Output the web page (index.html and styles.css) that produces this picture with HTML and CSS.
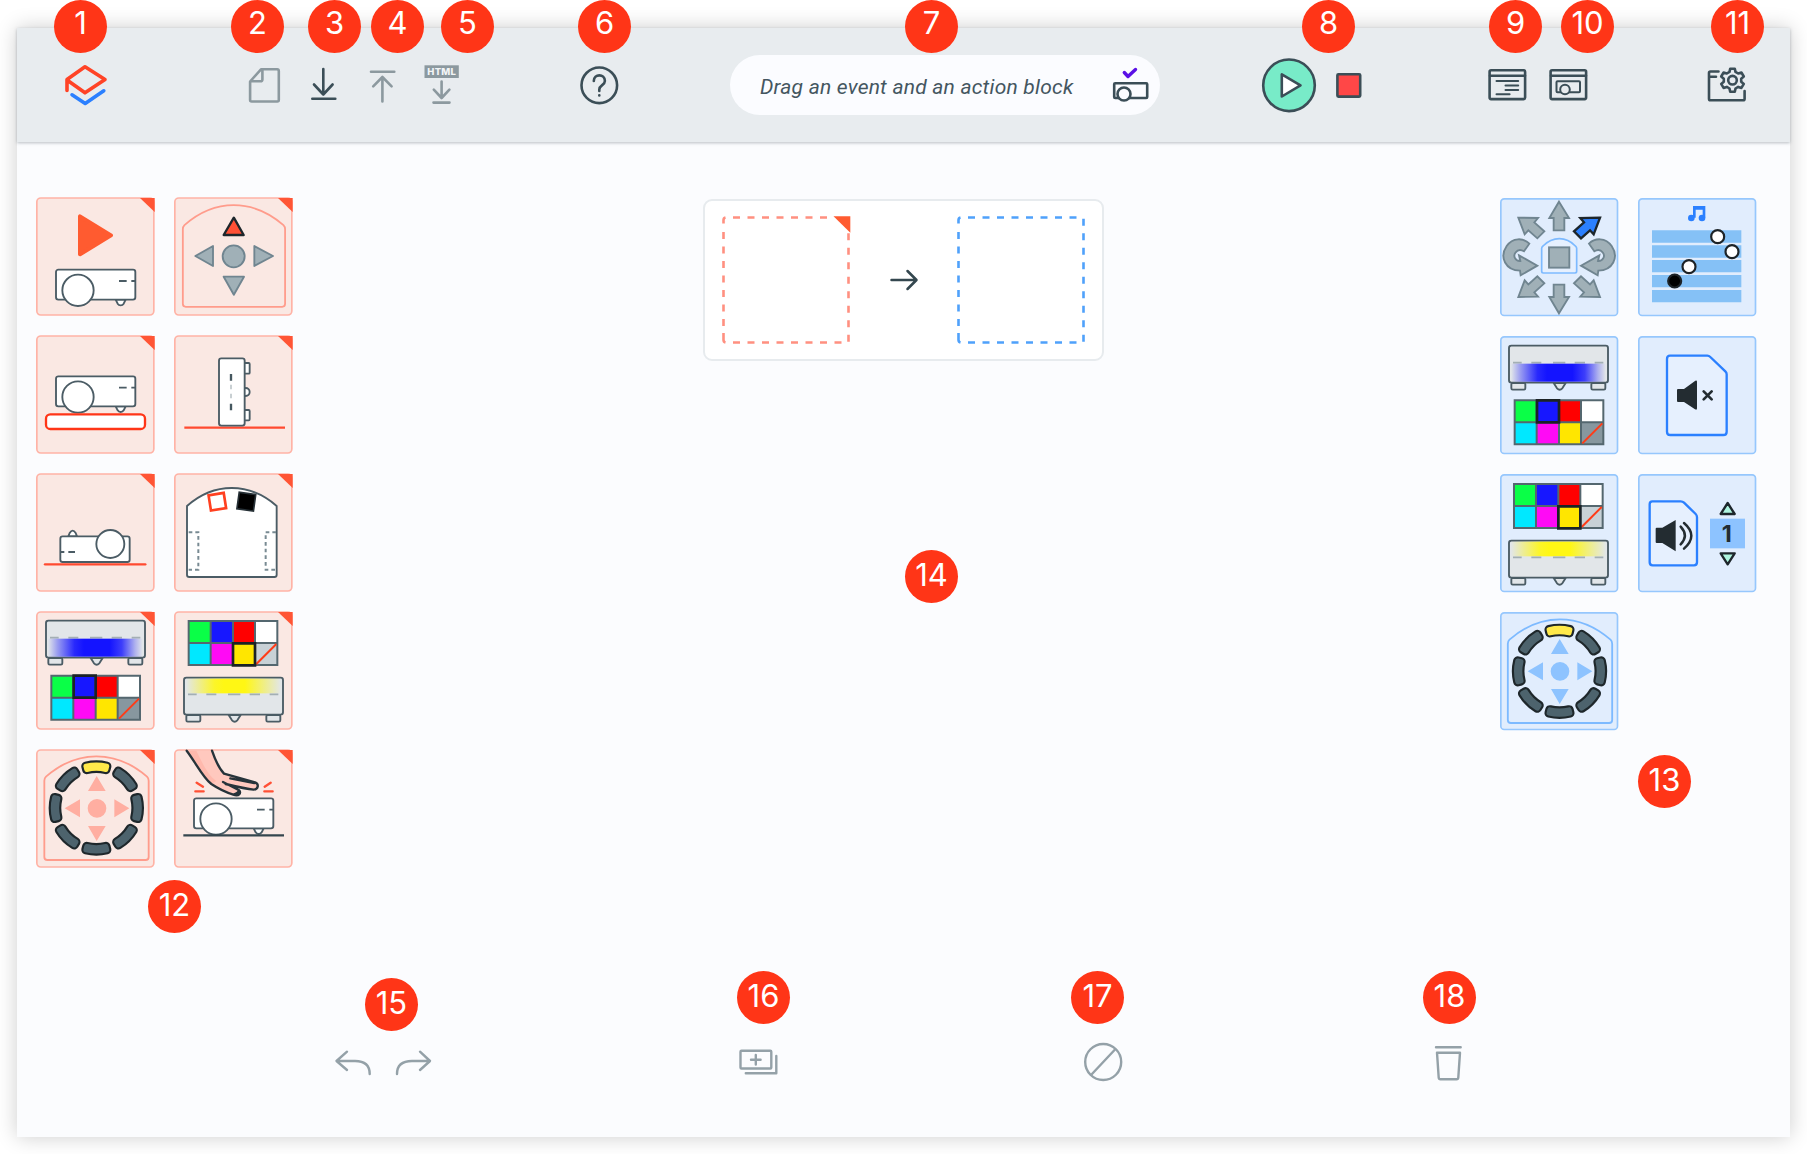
FILE: index.html
```html
<!DOCTYPE html>
<html lang="en">
<head>
<meta charset="utf-8">
<title>Robot blocks editor</title>
<link rel="stylesheet" href="styles.css">
</head>
<body>
<svg class="defs" width="0" height="0" aria-hidden="true">
  <defs>
    <linearGradient id="glow-blue"><stop offset="0" stop-color="#1414ff" stop-opacity="0"/><stop offset=".1" stop-color="#1414ff" stop-opacity=".35"/><stop offset=".28" stop-color="#1414ff" stop-opacity=".9"/><stop offset=".38" stop-color="#1414ff"/><stop offset=".65" stop-color="#1414ff"/><stop offset=".78" stop-color="#1414ff" stop-opacity=".8"/><stop offset=".92" stop-color="#1414ff" stop-opacity=".25"/><stop offset="1" stop-color="#1414ff" stop-opacity="0"/></linearGradient>
    <linearGradient id="glow-yellow"><stop offset="0" stop-color="#fff714" stop-opacity="0"/><stop offset=".3" stop-color="#fff714" stop-opacity=".9"/><stop offset=".4" stop-color="#fff714"/><stop offset=".62" stop-color="#fff714"/><stop offset="1" stop-color="#fff714" stop-opacity="0"/></linearGradient>
    <g id="corner"><path d="M312 3H356V45Z" fill="#ff5535"/></g>
    <g id="robot" class="line">
      <path d="M239 90l6 12q3 5 9 5t9-5l6-12z"/>
      <rect x="60" y="0" width="238" height="90" rx="7"/>
      <path d="M249 34h23M286 34h11"/>
      <circle cx="126" cy="62" r="47"/>
    </g>
    <g id="device">
      <g class="line pale">
        <rect x="37" y="113" width="42" height="20" rx="4"/><rect x="277" y="113" width="42" height="20" rx="4"/>
        <path d="M164 113l10 16q8 8 16 0l10-16z"/>
        <rect x="30" y="1" width="297" height="111" rx="7"/>
      </g>
    </g>
    <path id="dashes" d="M42 0h26M97 0h30M162 0h37M227 0h31M287 0h26" stroke="#a3afb4" stroke-width="5"/>
    <g id="swatches">
      <path d="M0 0H67V67H0Z" fill="#0aff47"/><path d="M67 0h67v67H67Z" fill="#1717ff"/><path d="M134 0h67v67h-67Z" fill="#f00"/><path d="M201 0h67v67h-67Z" fill="#fff"/>
      <path d="M0 67H67V134H0Z" fill="#00e8ff"/><path d="M67 67h67v67H67Z" fill="#ff0af5"/><path d="M134 67h67v67h-67Z" fill="#ffe600"/>
    </g>
    <g id="swatch-lines" fill="none" stroke="#54676f" stroke-width="6"><path d="M1 1H267V133H1ZM67 0V134M134 0V134M200 0V134M0 67H268"/><path d="M204 130L264 70" stroke="#ff3b17"/></g>
    <path id="seg" d="M-31.2 -125.2A129 129 0 0 1 31.2 -125.2L28.8 -115.5A119 119 0 0 0 -28.8 -115.5Z"/>
    <g id="ring-shape">
      <use href="#seg" transform="rotate(45)"/><use href="#seg" transform="rotate(90)"/><use href="#seg" transform="rotate(135)"/><use href="#seg" transform="rotate(180)"/><use href="#seg" transform="rotate(225)"/><use href="#seg" transform="rotate(270)"/><use href="#seg" transform="rotate(315)"/>
    </g>
    <g id="ring" stroke-linejoin="round">
      <use href="#ring-shape" fill="#1e272b" stroke="#1e272b" stroke-width="28"/>
      <use href="#seg" fill="#1e272b" stroke="#1e272b" stroke-width="28"/>
      <use href="#ring-shape" fill="#4d636d" stroke="#4d636d" stroke-width="15"/>
      <use href="#seg" fill="#ffe94a" stroke="#ffe94a" stroke-width="15"/>
    </g>
    <path id="arch" d="M25 95Q25 88 30 83Q100 22 181 22Q263 22 333 83Q338 88 338 95V324Q338 333 329 333H34Q25 333 25 324Z" fill="none"/>
    <path id="pad" d="M182 81L209 126H156ZM86 178L132 151V205ZM280 178L235 151V205ZM182 276L156 231H209ZM211 178a28 28 0 1 1-56 0a28 28 0 1 1 56 0Z"/>
    <path id="turn" d="M88 137C70 119 38 118 20 144C-3 178 17 217 60 218L62 232L112 203L57 172L61 189C46 190 38 174 47 163C54 154 64 155 72 160Z"/>
    <path id="diag" d="M300 59L241 60L252 73L222 100L243 121L270 97L281 109Z"/>
    <path id="straight" d="M177 11L207 60H193V97H161V60H148Z"/>
  </defs>
</svg>

<div class="window">
  <header class="header">
    <svg class="logo" viewBox="64.500 60.500 44 50"><g fill="none" stroke-width="3.600" stroke-linecap="round" stroke-linejoin="round"><path d="M67.500 91V80L85.500 67.300L105.500 80L85.500 93.300L67.500 80.500" stroke="#ff4326"/><path d="M72.500 95.300L85.700 104L104.300 91.300" stroke="#2b80ff"/></g></svg>
    <div class="group files">
      <svg class="icon muted" viewBox="244.500 60 40 50"><path d="M261.500 69.300H277.700Q279.300 69.300 279.300 71V100Q279.300 101.500 277.700 101.500H252.200Q250.600 101.500 250.600 100V81.500ZM262.900 70V79.500Q262.900 81.300 261 81.300H251.500"/></svg>
      <svg class="icon" viewBox="303 60 40 50"><path d="M323.300 69V94.500M314 84.500L323.300 94.500L332.600 84.500M312.300 98.700H335.300"/></svg>
      <svg class="icon muted" viewBox="362 60 40 50"><path d="M382.400 101.500V77M373.200 86.300L382.400 77L391.600 86.300M371 71.700H394.300"/></svg>
      <svg class="icon muted" viewBox="421 60 40 50"><rect x="424.500" y="65.300" width="34.300" height="12.700" class="tag"/><text x="441.700" y="75.300" class="tag-text">HTML</text><path d="M441.600 81.500V97.500M433.800 89.700L441.600 98L449.400 89.700M433.500 102.600H449.500"/></svg>
    </div>
    <div class="group help">
      <svg class="icon" viewBox="580 60 40 50"><circle cx="599.300" cy="85.300" r="17.800"/><path d="M593.800 81C593.800 73.500 604.900 73.500 604.900 81C604.900 85.200 599.300 85 599.300 89.500V91M599.300 95.200V95.400"/></svg>
    </div>
    <div class="hint">
      <span class="hint-text">Drag an event and an action block</span>
      <svg class="icon" viewBox="1110 60 40 50"><rect x="1114.200" y="83.200" width="33" height="14.800" rx="1"/><circle cx="1124" cy="94" r="6.500" fill="#fbfcff"/><path d="M1124.300 72.500L1128 76.500L1135.500 69.500" stroke="#5a10e6" stroke-width="3.400"/></svg>
    </div>
    <div class="group run">
      <svg class="play" viewBox="1261 57 56 56"><circle cx="1289" cy="85.300" r="25.800" fill="#78ebc8"/><path d="M1281.800 74.300V96.500L1300.500 85.300Z" fill="#fff"/></svg>
      <svg class="icon" viewBox="1329 60 40 50"><rect x="1337.400" y="74.200" width="22.800" height="22.400" rx="1" fill="#ff4747"/></svg>
    </div>
    <div class="group views">
      <svg class="icon" viewBox="1487 60 40 50"><rect x="1489.600" y="70.300" width="35.500" height="28.800" rx="1.500"/><path d="M1490 75.700H1525"/><path d="M1496.500 81.100H1518.200M1505.500 85.600H1518.200M1505.500 90H1518.200M1496.500 94.300H1509.600" stroke-width="2"/></svg>
      <svg class="icon" viewBox="1548 60 40 50"><rect x="1550.600" y="70.300" width="35.500" height="28.800" rx="1.500"/><path d="M1551 75.700H1586"/><rect x="1556.500" y="81.300" width="23.500" height="11" rx="1" stroke-width="2"/><circle cx="1565" cy="89.500" r="4.800" fill="#e8ecef" stroke-width="2"/></svg>
    </div>
    <div class="group settings">
      <svg class="icon" viewBox="1707 60 40 50"><path d="M1718.500 71.500H1710.500Q1709 71.500 1709 73V98.700Q1709 100.300 1710.500 100.300H1743Q1744.600 100.300 1744.600 98.700V91M1709.500 76.700H1716"/><g transform="translate(1732.500 80.200)"><path d="M-3-8.300L-2.300-11.500H2.300L3-8.300L5.700-6.700L8.900-7.700L11.300-3.700L8.700-1.500V1.500L11.300 3.700L8.900 7.700L5.700 6.700L3 8.300L2.300 11.500H-2.300L-3 8.300L-5.700 6.700L-8.900 7.700L-11.300 3.700L-8.700 1.500V-1.500L-11.300-3.700L-8.900-7.700L-5.700-6.700Z"/><circle r="4.300"/></g></svg>
    </div>
  </header>

  <main class="workspace">
    <section class="palette events">
      <svg class="tile" viewBox="0 0 357 357"><rect class="face" x="2.500" y="3" width="351" height="351" rx="12"/><use href="#corner"/><path d="M132 58V172L225 115Z" fill="#ff5b30" stroke="#ff5b30" stroke-width="12" stroke-linejoin="round"/><use href="#robot" y="218"/></svg>
      <svg class="tile" viewBox="0 0 357 357"><rect class="face" x="2.500" y="3" width="351" height="351" rx="12"/><use href="#corner"/><use href="#arch" x="-1" y="-1" transform="translate(3 4) scale(.98)" stroke="#ff9c8c" stroke-width="5.500"/><path d="M179.500 62L209 114H149Z" fill="#ff5035" stroke="#1d262b" stroke-width="7" stroke-linejoin="round"/><g class="gray"><path d="M64 177L117 147V207ZM297 177L241 147V207ZM149 239H210L179.500 293Z"/><circle cx="179" cy="178" r="33"/></g></svg>
      <svg class="tile" viewBox="0 0 357 357"><rect class="face" x="2.500" y="3" width="351" height="351" rx="12"/><use href="#corner"/><use href="#robot" y="124"/><rect x="30" y="238" width="297" height="44" rx="13" fill="#fff" stroke="#ff3517" stroke-width="7"/></svg>
      <svg class="tile" viewBox="0 0 357 357"><rect class="face" x="2.500" y="3" width="351" height="351" rx="12"/><use href="#corner"/><path d="M31 278H333" stroke="#ff4a30" stroke-width="7"/><g class="line"><rect x="204" y="84" width="23" height="32" rx="3"/><rect x="204" y="225" width="23" height="31" rx="3"/><circle cx="215" cy="171" r="12"/><rect x="135" y="70" width="77" height="202" rx="7"/></g><path d="M171 117v20M171 206v20" stroke="#45575f" stroke-width="7"/><path d="M171 149v14M171 176v14" stroke="#c8cfd2" stroke-width="6"/></svg>
      <svg class="tile" viewBox="0 0 357 357"><rect class="face" x="2.500" y="3" width="351" height="351" rx="12"/><use href="#corner"/><path d="M27 274H328" stroke="#ff4a30" stroke-width="7" stroke-linecap="round"/><g class="line"><path d="M97 190l4-10q9-14 18 0l4 10z"/><rect x="73" y="190" width="208" height="77" rx="7"/><path d="M74 237h11M97 237h20"/><circle cx="223" cy="213" r="42"/></g></svg>
      <svg class="tile" viewBox="0 0 357 357"><rect class="face" x="2.500" y="3" width="351" height="351" rx="12"/><use href="#corner"/><path class="line" d="M39 99Q100 45 173 45Q246 45 308 99V306Q308 312 301 312H46Q39 312 39 306Z"/><path d="M44 178H73V290H44M306 178H275V290H306" fill="none" stroke="#788a92" stroke-width="6" stroke-dasharray="11 9"/><rect x="-23" y="-23" width="46" height="46" transform="translate(130 86) rotate(-9)" fill="#fff" stroke="#ff4020" stroke-width="8"/><rect x="-25" y="-25" width="50" height="50" transform="translate(217 86) rotate(8)" stroke="#263036" stroke-width="5"/></svg>
      <svg class="tile" viewBox="0 0 357 357"><rect class="face" x="2.500" y="3" width="351" height="351" rx="12"/><use href="#corner"/><g transform="translate(0 28)"><use href="#device"/><use href="#dashes" y="52"/><rect x="36" y="55" width="284" height="54" fill="url(#glow-blue)"/></g><g transform="translate(45 193)"><use href="#swatches"/><path d="M201 67h67v67h-67Z" fill="#87979f"/><use href="#swatch-lines"/><path d="M68 1h66v66H68Z" fill="none" stroke="#1b2226" stroke-width="8"/></g></svg>
      <svg class="tile" viewBox="0 0 357 357"><rect class="face" x="2.500" y="3" width="351" height="351" rx="12"/><use href="#corner"/><g transform="translate(0 199)"><use href="#device"/><rect x="36" y="4" width="285" height="44" fill="url(#glow-yellow)"/><use href="#dashes" y="51"/></g><g transform="translate(43 29)"><use href="#swatches"/><path d="M201 67h67v67h-67Z" fill="#c8d1d6"/><use href="#swatch-lines"/><path d="M134 68h66v66h-66Z" fill="none" stroke="#1b2226" stroke-width="8"/></g></svg>
      <svg class="tile" viewBox="0 0 357 357"><rect class="face" x="2.500" y="3" width="351" height="351" rx="12"/><use href="#corner"/><use href="#arch" stroke="#ff9c8c" stroke-width="5.500"/><use href="#pad" fill="#ffaea1"/><use href="#ring" transform="translate(181 177)"/></svg>
      <svg class="tile" viewBox="0 0 357 357"><rect class="face" x="2.500" y="3" width="351" height="351" rx="12"/><use href="#corner"/><use href="#robot" y="148"/><path d="M28 259H330" stroke="#34464e" stroke-width="7"/><g stroke-linejoin="round" stroke-linecap="round"><path d="M38 5C64 39 87 86 112 105C133 119 159 131 178 137C195 143 204 131 194 123L171 111C193 116 219 120 239 122C253 121 256 105 243 100L150 74C134 57 124 34 114 5Z" fill="#ffc8be"/><path d="M38 5C64 39 87 86 112 105L127 96C101 78 84 40 67 5Z" fill="#ffb9ad"/><path d="M38 5C64 39 87 86 112 105C133 119 159 131 178 137C195 143 204 131 194 123L147 99M155 105C184 112 219 120 239 122C253 121 256 105 243 100L150 74C134 57 124 34 114 5M169 88L241 102M178 137Q196 132 194 123" fill="none" stroke="#26333a" stroke-width="7"/></g><path d="M68 101L87 113M64 127H89M290 101L272 113M271 127H296" stroke="#ff5035" stroke-width="7" stroke-linecap="round"/></svg>
    </section>

    <section class="program">
      <svg class="slot event-slot" viewBox="0 0 128 128"><path d="M11 1.500H106M11 126.500H121M1.500 16V111M126.500 17.300V127" stroke-dasharray="7 7.500"/><path d="M1.500 7.500V4Q1.500 2 3.500 1.500M1.500 117V124Q1.500 126 3.500 126.500"/><path class="slot-corner" d="M111.500 .3H128.300V16.700Z"/></svg>
      <svg class="arrow" viewBox="0 0 28 22"><path d="M1.500 11H26M17.500 2L26.500 11L17.500 20"/></svg>
      <svg class="slot action-slot" viewBox="0 0 128 128"><path d="M11 1.500H121M11 126.500H121M1.500 16V111M126.500 2.700V127" stroke-dasharray="7 7.500"/><path d="M1.500 7.500V4Q1.500 2 3.500 1.500M1.500 117V124Q1.500 126 3.500 126.500"/></svg>
    </section>

    <section class="palette actions">
      <svg class="tile" viewBox="0 0 357 357"><rect class="face" x="2.500" y="2.500" width="350" height="350" rx="10"/><path d="M125 151Q125 147 129 144Q151 122 178 122Q205 122 226 144Q230 147 230 151V220Q230 225 225 225H130Q125 225 125 220Z" fill="#e6f0fe" stroke="#7dbaff" stroke-width="5"/><g class="gray move"><rect x="147" y="148" width="61" height="61"/><use href="#straight"/><use href="#straight" transform="translate(0 357) scale(1 -1)"/><use href="#turn"/><use href="#turn" transform="translate(355 0) scale(-1 1)"/><use href="#diag" transform="translate(355 0) scale(-1 1)"/><use href="#diag" transform="translate(0 356) scale(1 -1)"/><use href="#diag" transform="translate(355 356) scale(-1 -1)"/></g><use href="#diag" fill="#2b80ff" stroke="#1d262b" stroke-width="7"/></svg>
      <svg class="tile" viewBox="0 0 357 357"><rect class="face" x="2.500" y="2.500" width="350" height="350" rx="10"/><path d="M42 97H310V134H42ZM42 142H310V179H42ZM42 186H310V223H42ZM42 231H310V268H42ZM42 276H310V313H42Z" fill="#85c1f6"/><path d="M169 59V28H198V59M169 31H198" fill="none" stroke="#2b80ff" stroke-width="8"/><circle cx="160" cy="60" r="10" fill="#2b80ff"/><circle cx="192" cy="60" r="10" fill="#2b80ff"/><g fill="#fff" stroke="#1d2327" stroke-width="6.500"><circle cx="239" cy="116" r="19.500"/><circle cx="282" cy="161" r="19.500"/><circle cx="153" cy="206" r="19.500"/><circle cx="110" cy="249" r="19.500" fill="#000"/></g></svg>
      <svg class="tile" viewBox="0 0 357 357"><rect class="face" x="2.500" y="2.500" width="350" height="350" rx="10"/><g transform="translate(-3 28)"><use href="#device"/><use href="#dashes" y="52"/><rect x="36" y="55" width="284" height="54" fill="url(#glow-blue)"/></g><g transform="translate(43 192)"><use href="#swatches"/><path d="M201 67h67v67h-67Z" fill="#87979f"/><use href="#swatch-lines"/><path d="M68 1h66v66H68Z" fill="none" stroke="#1b2226" stroke-width="8"/></g></svg>
      <svg class="tile" viewBox="0 0 357 357"><rect class="face" x="2.500" y="2.500" width="350" height="350" rx="10"/><path class="doc" d="M96 59H208Q213 59 217 63L262 106Q266 110 266 115V287Q266 297 256 297H97Q87 297 87 287V69Q87 59 96 59Z"/><path d="M117 162Q117 159 120 159H138L172 134Q177 132 177 137V217Q177 224 171 220L138 198H120Q117 198 117 195Z" fill="#232c31"/><path d="M197 166L221 190M221 166L197 190" stroke="#232c31" stroke-width="8" stroke-linecap="round"/></svg>
      <svg class="tile" viewBox="0 0 357 357"><rect class="face" x="2.500" y="2.500" width="350" height="350" rx="10"/><g transform="translate(-3 199)"><use href="#device"/><rect x="36" y="4" width="285" height="44" fill="url(#glow-yellow)"/><use href="#dashes" y="51"/></g><g transform="translate(41 29)"><use href="#swatches"/><path d="M201 67h67v67h-67Z" fill="#c8d1d6"/><use href="#swatch-lines"/><path d="M134 68h66v66h-66Z" fill="none" stroke="#1b2226" stroke-width="8"/></g></svg>
      <svg class="tile" viewBox="0 0 357 357"><rect class="face" x="2.500" y="2.500" width="350" height="350" rx="10"/><path class="doc" d="M43 82H128Q134 82 138 86L173 120Q177 124 177 130V265Q177 274 168 274H44Q35 274 35 265V91Q35 82 43 82Z"/><path d="M53 164Q53 161 56 161H73L113 138V232L73 207H56Q53 207 53 204Z" fill="#232c31"/><path d="M128 158Q153 185 128 211M138 147Q182 185 138 224" fill="none" stroke="#232c31" stroke-width="7.500" stroke-linecap="round"/><rect x="216" y="134" width="105" height="89" fill="#8dc3ff"/><text class="track" x="266" y="204">1</text><path d="M269 87L290 120H248ZM269 271L290 238H248Z" fill="#aef5df" stroke="#1d262b" stroke-width="7" stroke-linejoin="round"/></svg>
      <svg class="tile" viewBox="0 0 357 357"><rect class="face" x="2.500" y="2.500" width="350" height="350" rx="10"/><use href="#arch" x="-1.500" stroke="#7dbaff" stroke-width="5.500"/><use href="#pad" x="-3" fill="#8dc3ff"/><use href="#ring" transform="translate(178.500 178)"/></svg>
    </section>
  </main>

  <footer class="toolbar">
    <svg class="tool history" viewBox="333 1037 100 50"><path d="M347 1051.700L336.500 1061L347 1070M337 1061H355Q369.700 1061 369.700 1074M420 1051.700L430 1061L420 1070M429.500 1061H412Q397 1061 397 1074"/></svg>
    <svg class="tool duplicate" viewBox="738 1037 40 50"><rect x="740.500" y="1050.700" width="30.800" height="17.800" rx="1"/><path d="M776.300 1056V1073.300H745.800M755.800 1055V1064.500M751 1059.800H760.600"/></svg>
    <svg class="tool disable" viewBox="1083 1037 40 50"><circle cx="1103.200" cy="1062" r="18"/><path d="M1115 1049.500L1091.500 1074.500"/></svg>
    <svg class="tool trash" viewBox="1428 1037 40 50"><path d="M1436 1047.300H1460.700M1437 1052.700H1460L1458.300 1077.500Q1458.200 1079.300 1456.500 1079.300H1440.500Q1438.800 1079.300 1438.700 1077.500Z"/></svg>
  </footer>
</div>

<div class="callouts">
  <b class="c1">1</b><b class="c2">2</b><b class="c3">3</b><b class="c4">4</b><b class="c5">5</b><b class="c6">6</b><b class="c7">7</b><b class="c8">8</b><b class="c9">9</b><b class="c10">10</b><b class="c11">11</b><b class="low c12">12</b><b class="low c13">13</b><b class="low c14">14</b><b class="low c15">15</b><b class="low c16">16</b><b class="low c17">17</b><b class="low c18">18</b>
</div>
</body>
</html>
```
FILE: styles.css
```css
* { box-sizing: border-box; }

body {
  margin: 0;
  height: 1154px;
  padding: 28px 17px 17px;
  overflow: hidden;
  position: relative;
  background: #fff;
  font-family: Inter, "Liberation Sans", sans-serif;
}

svg { display: block; flex: none; overflow: visible; }
.defs { position: absolute; }

.window {
  display: flex;
  flex-direction: column;
  width: 1773px;
  height: 1109px;
  background: #fbfcfe;
  box-shadow: 0 0 20px rgba(0, 0, 0, .2);
}

/* Header */
.header {
  display: flex;
  align-items: center;
  height: 114px;
  flex: none;
  padding-left: 47px;
  background: #e8ecef;
  box-shadow: 0 1px 3px rgba(60, 75, 85, .35);
}
.group { display: flex; align-items: center; }
.logo { width: 44px; height: 50px; }
.icon, .play {
  width: 40px;
  height: 50px;
  fill: none;
  stroke: #3b4e57;
  stroke-width: 2.6;
  stroke-linecap: round;
  stroke-linejoin: round;
}
.play { width: 56px; height: 56px; }
.icon.muted { stroke: #8c999f; }
.tag { fill: #8c999f; stroke: none; }
.tag-text { fill: #f2f5f6; stroke: none; font: 800 9.5px Inter, sans-serif; letter-spacing: .2px; text-anchor: middle; }
.files { margin-left: 136px; gap: 19px; }
.help { margin-left: 119px; }
.hint {
  display: flex;
  align-items: center;
  justify-content: space-between;
  width: 430px;
  height: 60px;
  margin-left: 110px;
  padding: 0 10px 0 30px;
  border-radius: 30px;
  background: #fbfcff;
}
.hint-text {
  padding-top: 3px;
  font: italic 400 21px Roboto, sans-serif;
  letter-spacing: .22px;
  color: #44565f;
  white-space: nowrap;
}
.run { margin-left: 101px; gap: 12px; }
.views { margin-left: 118px; gap: 21px; }
.settings { margin-left: 119px; }

/* Workspace */
.workspace {
  display: flex;
  align-items: flex-start;
  flex: 1;
  padding: 55px 33px 0 19px;
}
.palette { display: grid; grid-template-columns: 119px 119px; gap: 19px; }
.tile { width: 119px; height: 119px; }
.events .face { fill: #fae8e3; stroke: #ffb3a6; stroke-width: 5; }
.actions .face { fill: #e1edfd; stroke: #96c7fd; stroke-width: 5; }
.actions { margin: 1px 0 0 auto; }
.line { fill: #fff; stroke: #4b5c65; stroke-width: 5.6; stroke-linejoin: round; }
.pale { fill: #e2e6e9; }
.gray { fill: #a0b0b7; stroke: #708590; stroke-width: 5.6; stroke-linejoin: round; }
.move { stroke-linejoin: miter; }
.doc { fill: #e6f0fe; stroke: #2b80ff; stroke-width: 7; }
.track { font: 700 70px Inter, sans-serif; text-anchor: middle; fill: #232c31; }

.program {
  display: flex;
  align-items: center;
  justify-content: space-between;
  width: 401px;
  height: 162px;
  margin: 2px 0 0 410px;
  padding: 0 17px;
  border: 2px solid #e7ebee;
  border-radius: 9px;
  background: #fff;
}
.slot { width: 128px; height: 128px; fill: none; stroke-width: 2.6; }
.event-slot { stroke: #ff9080; }
.action-slot { stroke: #4fa1fb; }
.slot-corner { fill: #ff5b30; stroke: none; }
.arrow { width: 28px; height: 22px; fill: none; stroke: #34474f; stroke-width: 2.5; stroke-linecap: round; stroke-linejoin: round; }

/* Bottom toolbar */
.toolbar { display: flex; height: 100px; flex: none; padding-left: 316px; }
.tool { width: 40px; height: 50px; fill: none; stroke: #94a1a8; stroke-width: 2.4; stroke-linecap: round; stroke-linejoin: round; }
.history { width: 100px; margin-right: 305px; }
.duplicate, .disable { margin-right: 305px; }

/* Numbered callouts pinned over the window */
.callouts b {
  position: absolute;
  width: 53px;
  height: 53px;
  border-radius: 50%;
  background: #ff3517;
  color: #fff;
  font-weight: 400;
  font-size: 31px;
  line-height: 46px;
  text-align: center;
  top: 0;
}
.callouts .low { line-height: 50px; }
.callouts .c1 { left: 54px; }
.callouts .c2 { left: 231px; }
.callouts .c3 { left: 308px; }
.callouts .c4 { left: 371px; }
.callouts .c5 { left: 441px; }
.callouts .c6 { left: 578px; }
.callouts .c7 { left: 905px; }
.callouts .c8 { left: 1302px; }
.callouts .c9 { left: 1489px; }
.callouts .c10 { left: 1561px; }
.callouts .c11 { left: 1711px; }
.callouts .c12 { left: 148px; top: 880px; }
.callouts .c13 { left: 1638px; top: 755px; }
.callouts .c14 { left: 905px; top: 550px; }
.callouts .c15 { left: 365px; top: 978px; }
.callouts .c16 { left: 737px; top: 971px; }
.callouts .c17 { left: 1071px; top: 971px; }
.callouts .c18 { left: 1423px; top: 971px; }
```
